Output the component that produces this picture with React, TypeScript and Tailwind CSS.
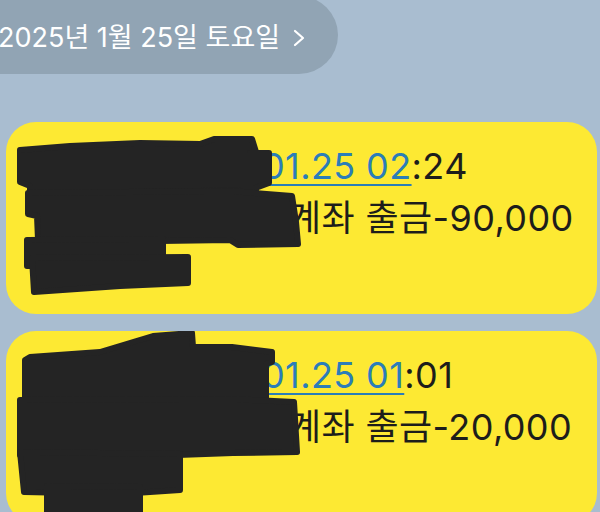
import React from 'react';

const FONT = "font-['Inter','Noto_Sans_CJK_KR',sans-serif]";

type Msg = {
  link: string;
  rest: string;
  amount: string;
  marks: string[];
  view: string;
};

const messages: Msg[] = [
  {
    link: '01.25 02',
    rest: ':24',
    amount: '-90,000',
    view: '6 122 591 192',
    marks: [
      'M20 150 L70 146 L140 143 L200 144 L214 139 L252 139 L256 152 L256 190 L30 194 L30 186 L20 182 Z',
      'M250 153 L269 153 L269 183 L250 190 Z',
      'M28 193 L230 191 L292 196 L296 222 L298 244 L238 245 L230 240 L160 241 L38 240 L37 216 L28 214 Z',
      'M27 240 L163 239 L163 265 L27 266 Z',
      'M32 258 L188 257 L188 283 L120 286 L34 292 Z',
    ],
  },
  {
    link: '01.25 01',
    rest: ':01',
    amount: '-20,000',
    view: '6 331 591 192',
    marks: [
      'M30 357 L100 352 L153 336 L192 333 L193 347 L232 347 L272 352 L272 362 L266 364 L266 398 L25 398 L25 360 Z',
      'M20 400 L232 399 L294 402 L297 452 L233 453 L150 456 L20 455 Z',
      'M20 452 L180 454 L180 490 L120 494 L24 492 Z',
      'M47 486 L140 487 L140 523 L47 523 Z',
    ],
  },
];

function Bubble({ m }: { m: Msg }) {
  return (
    <div className="relative h-[192px] rounded-[30px] bg-[#fde933] pl-[256px] pt-[18px] text-[36px] leading-[52px] tracking-[0.4px] text-[#1d1d1b]">
      <div className="whitespace-nowrap">
        <span className="text-[#2b7db8] underline decoration-[2px] underline-offset-[5px]">{m.link}</span>
        {m.rest}
      </div>
      <div className="whitespace-nowrap pl-[26px]">
        계좌 출금{m.amount}
      </div>
      <svg
        className="absolute inset-0 h-full w-full"
        viewBox={m.view}
        preserveAspectRatio="none"
      >
        {m.marks.map((d, i) => (
          <path key={i} d={d} fill="#242424" stroke="#242424" strokeWidth={6} strokeLinejoin="round" />
        ))}
      </svg>
    </div>
  );
}

export default function App() {
  return (
    <div className={`h-[512px] w-[600px] overflow-hidden bg-[#a9bdd0] ${FONT}`}>
      <div className="flex">
        <div className="-ml-[40px] -mt-[4px] flex h-[78px] items-center gap-[12px] rounded-full bg-[#91a4b4] pl-[38px] pr-[32px] pt-[6px] text-[27px] text-white">
          <span className="whitespace-nowrap">2025년 1월 25일 토요일</span>
          <svg width="14" height="18" viewBox="0 0 14 18" fill="none">
            <path d="M3 2 L11 9 L3 16" stroke="white" strokeWidth="2.2" strokeLinecap="round" strokeLinejoin="round" />
          </svg>
        </div>
      </div>
      <div className="ml-[6px] mr-[3px] mt-[48px] flex flex-col gap-[17px]">
        {messages.map((m, i) => (
          <Bubble key={i} m={m} />
        ))}
      </div>
    </div>
  );
}
